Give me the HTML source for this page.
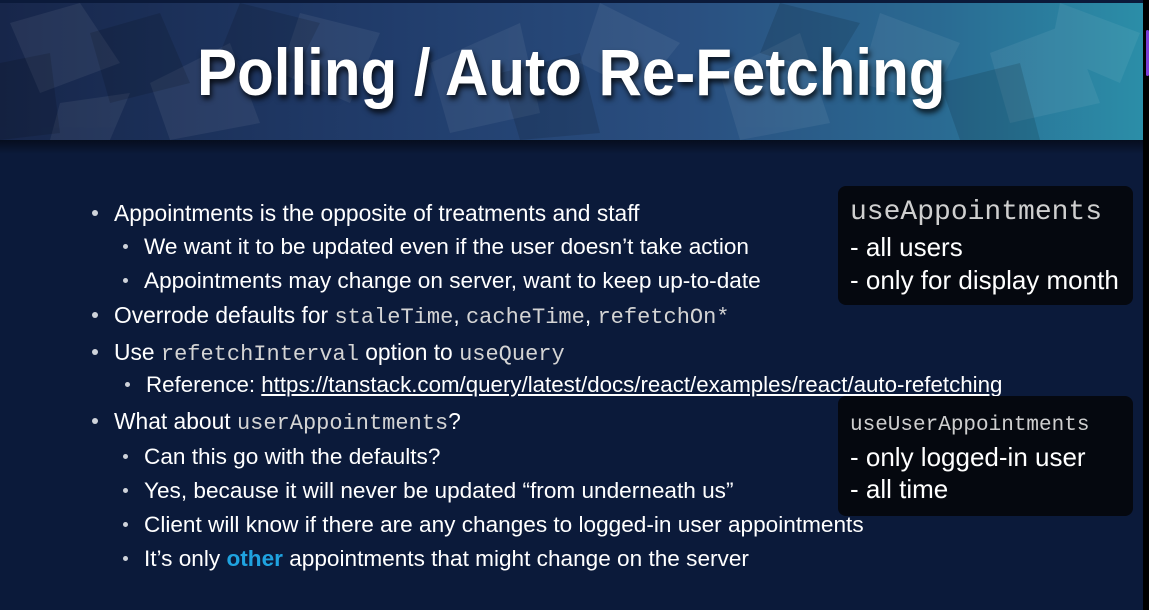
<!DOCTYPE html>
<html><head><meta charset="utf-8"><style>
html,body{margin:0;padding:0;width:1149px;height:610px;overflow:hidden;background:#000}
.slide{position:absolute;left:0;top:0;width:1143px;height:610px;background:#0b1a3a;font-family:"Liberation Sans",sans-serif;color:#fff}
.hdr{position:absolute;left:0;top:3px;width:1143px;height:137px;background:linear-gradient(90deg,#17264a 0%,#213d6c 35%,#2a4f80 60%,#2a6a92 82%,#2b8ea8 100%);overflow:hidden}
.hshadow{position:absolute;left:0;top:140px;width:1143px;height:14px;background:linear-gradient(#060d1e,#0b1a3a)}
.title{position:absolute;left:0;width:1143px;top:34px;text-align:center}
.title span{display:inline-block;font-weight:bold;font-size:66px;line-height:70px;transform:scaleX(0.91);transform-origin:center;text-shadow:2px 4px 6px rgba(0,0,0,.8)}
.l{position:absolute;white-space:nowrap;line-height:22px;font-size:22.8px}
.l2{font-size:22.6px}
.b{position:absolute;width:6px;height:6px;border-radius:50%;background:#cfd3da}
.m{font-family:"Liberation Mono",monospace;color:#d4d4d4;font-size:22px}
a{color:#fff;text-decoration:underline}
.box{position:absolute;left:838px;width:295px;background:#05080f;border-radius:8px}
.box div{position:absolute;left:12px;white-space:nowrap;font-size:26px;line-height:26px}
.side{position:absolute;left:1146px;top:30px;width:3px;height:46px;background:#7b3fd6;border-radius:2px}
</style></head><body>
<div class="slide">
<div class="hdr">
<svg width="1143" height="137" style="position:absolute;left:0;top:0">
<g fill="#fff" opacity="0.06">
<polygon points="10,20 80,0 120,60 40,90"/><polygon points="150,80 230,40 260,120 170,137"/>
<polygon points="300,10 380,30 350,100 280,70"/><polygon points="430,60 520,20 540,110 450,130"/>
<polygon points="600,0 680,40 640,90 580,60"/><polygon points="720,70 800,30 830,120 740,137"/>
<polygon points="880,10 960,40 930,100 860,80"/><polygon points="990,50 1070,20 1100,100 1010,120"/>
<polygon points="1060,0 1140,30 1120,80 1050,50"/><polygon points="60,100 130,90 110,137 50,137"/>
</g>
<g fill="#000" opacity="0.12">
<polygon points="90,30 160,10 190,80 110,100"/><polygon points="240,0 320,20 290,80 220,50"/>
<polygon points="500,70 580,50 600,130 520,137"/><polygon points="780,0 860,20 830,70 760,50"/>
<polygon points="940,80 1020,60 1040,137 960,137"/><polygon points="0,60 50,50 60,130 0,137"/>
</g>
</svg>
<div class="title"><span>Polling / Auto Re-Fetching</span></div>
</div>
<div class="hshadow"></div>

<div class="b" style="left:92px;top:210px"></div><div class="l" style="left:114px;top:202px">Appointments is the opposite of treatments and staff</div>
<div class="b" style="left:123px;top:244px;width:5px;height:5px"></div><div class="l l2" style="left:144px;top:236px">We want it to be updated even if the user doesn’t take action</div>
<div class="b" style="left:123px;top:278px;width:5px;height:5px"></div><div class="l l2" style="left:144px;top:270px">Appointments may change on server, want to keep up-to-date</div>
<div class="b" style="left:92px;top:312px"></div><div class="l" style="left:114px;top:304px">Overrode defaults for <span class="m">staleTime</span>, <span class="m">cacheTime</span>, <span class="m">refetchOn*</span></div>
<div class="b" style="left:92px;top:349px"></div><div class="l" style="left:114px;top:341px">Use <span class="m">refetchInterval</span> option to <span class="m">useQuery</span></div>
<div class="b" style="left:125px;top:382px;width:5px;height:5px"></div><div class="l l2" style="left:146px;top:374px;font-size:22.3px">Reference: <a>https://tanstack.com/query/latest/docs/react/examples/react/auto-refetching</a></div>
<div class="b" style="left:92px;top:418px"></div><div class="l" style="left:114px;top:410px">What about <span class="m">userAppointments</span>?</div>
<div class="b" style="left:123px;top:454px;width:5px;height:5px"></div><div class="l l2" style="left:144px;top:446px">Can this go with the defaults?</div>
<div class="b" style="left:123px;top:488px;width:5px;height:5px"></div><div class="l l2" style="left:144px;top:480px">Yes, because it will never be updated “from underneath us”</div>
<div class="b" style="left:123px;top:522px;width:5px;height:5px"></div><div class="l l2" style="left:144px;top:514px">Client will know if there are any changes to logged-in user appointments</div>
<div class="b" style="left:123px;top:556px;width:5px;height:5px"></div><div class="l l2" style="left:144px;top:548px">It’s only <b style="color:#1fa3e0">other</b> appointments that might change on the server</div>

<div class="box" style="top:186px;height:119px">
<div class="m" style="top:14px;font-size:28px;color:#cfcfcf">useAppointments</div>
<div style="top:48px">- all users</div>
<div style="top:81px">- only for display month</div>
</div>
<div class="box" style="top:396px;height:120px">
<div class="m" style="top:17px;font-size:21px;color:#cfcfcf">useUserAppointments</div>
<div style="top:48px">- only logged-in user</div>
<div style="top:80px">- all time</div>
</div>
</div>
<div class="side"></div>
</body></html>
